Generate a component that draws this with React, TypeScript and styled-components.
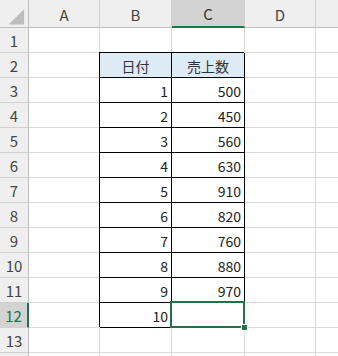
import styled, { createGlobalStyle, css } from "styled-components";

const GlobalStyle = createGlobalStyle`
  html, body {
    margin: 0;
    padding: 0;
    background: #ffffff;
    overflow: hidden;
  }
`;

// last column is only partly in view, its letter falls outside the window
const columns = ["A", "B", "C", "D", ""];
const selectedCol = "C";
const selectedRow = 12;
const visibleRows = 13;

// B2:C12 table
const table: Record<number, [string, string]> = {
  2: ["日付", "売上数"],
  3: ["1", "500"],
  4: ["2", "450"],
  5: ["3", "560"],
  6: ["4", "630"],
  7: ["5", "910"],
  8: ["6", "820"],
  9: ["7", "760"],
  10: ["8", "880"],
  11: ["9", "970"],
  12: ["10", ""],
};

const rows = Array.from({ length: 14 }, (_, i) => i + 1);

export default function App() {
  return (
    <>
      <GlobalStyle />
      <Sheet>
        <Corner>
          <svg width="29" height="28" viewBox="0 0 29 28">
            <polygon points="9,25 25,25 25,9" fill="#bcbcbc" />
          </svg>
        </Corner>
        {columns.map((c, i) => (
          <ColHeader key={i} $selected={c === selectedCol}>
            {c}
          </ColHeader>
        ))}
        {rows.map((r) => (
          <Row key={r} r={r} />
        ))}
      </Sheet>
    </>
  );
}

function Row({ r }: { r: number }) {
  const data = table[r];
  return (
    <>
      <RowHeader $selected={r === selectedRow}>
        {r <= visibleRows ? r : ""}
      </RowHeader>
      {columns.map((c, i) => {
        let value = "";
        let inTable = false;
        if (data && (c === "B" || c === "C")) {
          inTable = true;
          value = c === "B" ? data[0] : data[1];
        }
        const isHead = r === 2 && inTable;
        const isSelected = c === selectedCol && r === selectedRow;
        return (
          <Cell key={i} $table={inTable} $head={isHead}>
            {value}
            {isSelected && (
              <Selection>
                <FillHandle />
              </Selection>
            )}
          </Cell>
        );
      })}
    </>
  );
}

const Sheet = styled.div`
  display: grid;
  grid-template-columns: 29px 71px 72px 73px 71px 71px;
  grid-template-rows: 28px repeat(14, 25px);
  width: 338px;
  height: 356px;
  overflow: hidden;
  font-family: "Noto Sans CJK JP", "Liberation Sans", sans-serif;
  font-size: 14px;
  color: #222;
`;

const headerBase = css`
  background: #efefef;
  color: #444;
  display: flex;
  align-items: center;
  justify-content: center;
  box-sizing: border-box;
  font-family: "Noto Sans CJK JP", sans-serif;
  font-size: 15px;
`;

const Corner = styled.div`
  ${headerBase};
  border-right: 1px solid #bdbdbd;
  border-bottom: 1px solid #bdbdbd;
  svg {
    display: block;
  }
`;

const ColHeader = styled.div<{ $selected: boolean }>`
  ${headerBase};
  padding-top: 1px;
  border-right: 1px solid #d0d0d0;
  border-bottom: 1px solid #bdbdbd;
  ${(p) =>
    p.$selected &&
    css`
      background: #d3d3d3;
      border-bottom: 2px solid #217346;
      color: #333;
    `}
`;

const RowHeader = styled.div<{ $selected: boolean }>`
  ${headerBase};
  border-right: 1px solid #bdbdbd;
  border-bottom: 1px solid #d0d0d0;
  ${(p) =>
    p.$selected &&
    css`
      background: #d3d3d3;
      border-right: 2px solid #217346;
      color: #217346;
    `}
`;

const Cell = styled.div<{ $table: boolean; $head: boolean }>`
  position: relative;
  box-sizing: border-box;
  border-right: 1px solid #dadada;
  border-bottom: 1px solid #dadada;
  display: flex;
  align-items: center;
  justify-content: flex-end;
  padding: 1px 3px 0 0;
  white-space: nowrap;
  ${(p) =>
    p.$table &&
    css`
      border-right-color: #000;
      border-bottom-color: #000;
      box-shadow: -1px -1px 0 0 #000;
    `}
  ${(p) =>
    p.$head &&
    css`
      background: #ddebf7;
      justify-content: center;
      padding-right: 0;
      color: #333;
    `}
`;

const Selection = styled.div`
  position: absolute;
  z-index: 2;
  left: -2px;
  top: -2px;
  right: -1px;
  bottom: -1px;
  border: 2px solid #217346;
  pointer-events: none;
`;

const FillHandle = styled.div`
  position: absolute;
  right: -5px;
  bottom: -5px;
  width: 7px;
  height: 7px;
  background: #217346;
  border: 1px solid #ffffff;
  box-sizing: border-box;
`;
